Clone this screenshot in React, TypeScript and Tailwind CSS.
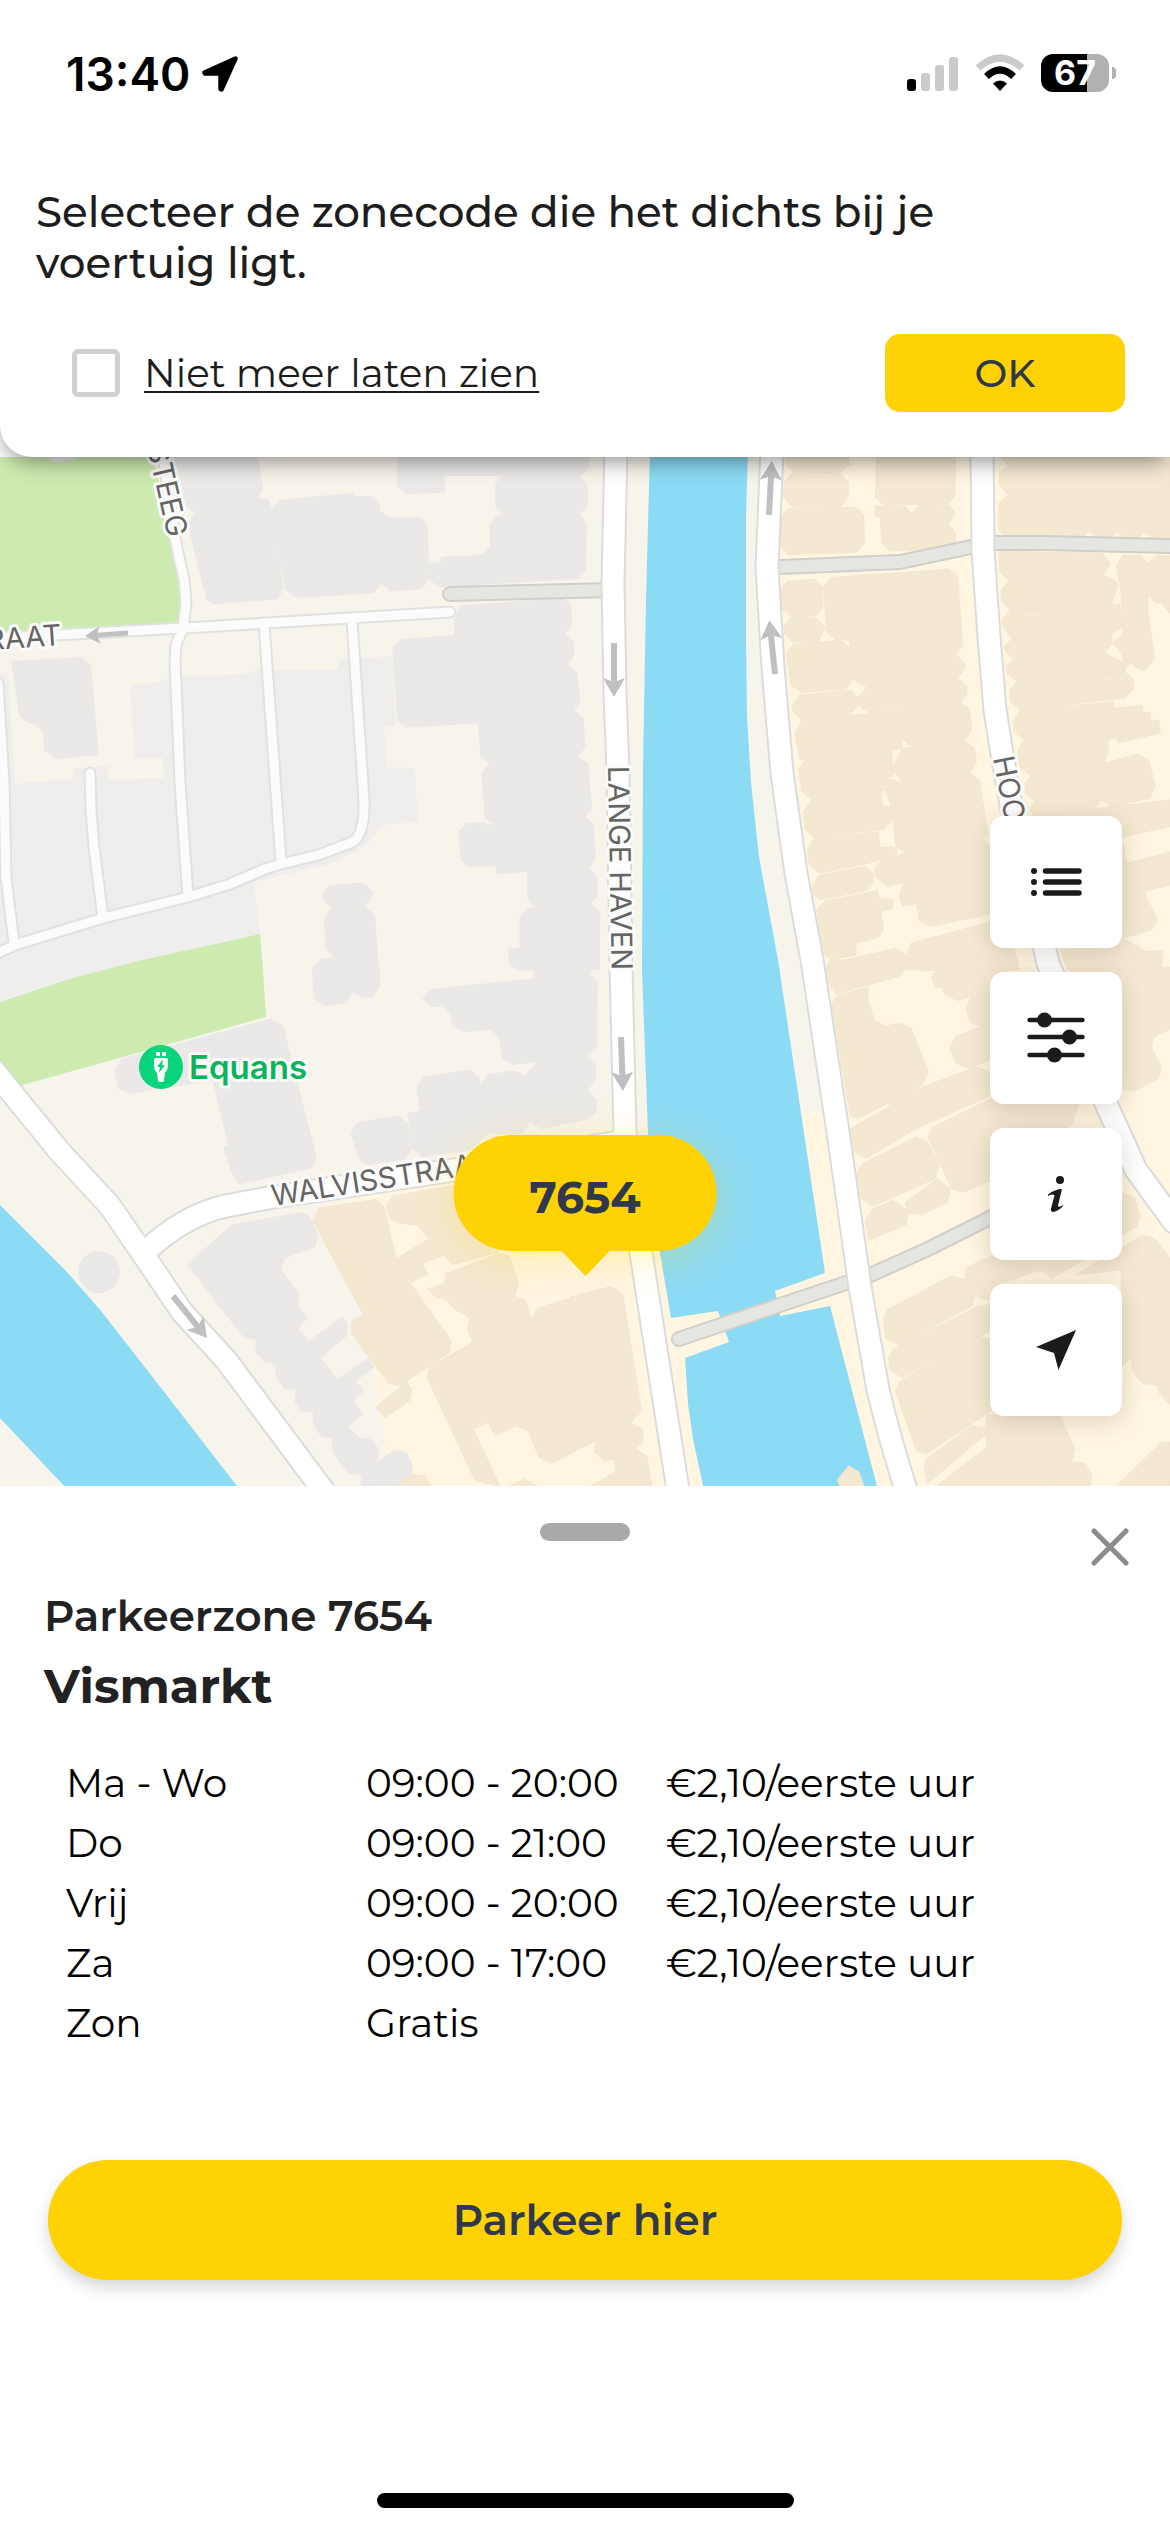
import React, { useState } from 'react';

const TARIFFS = [
  { day: 'Ma - Wo', hours: '09:00 - 20:00', price: '€2,10/eerste uur' },
  { day: 'Do', hours: '09:00 - 21:00', price: '€2,10/eerste uur' },
  { day: 'Vrij', hours: '09:00 - 20:00', price: '€2,10/eerste uur' },
  { day: 'Za', hours: '09:00 - 17:00', price: '€2,10/eerste uur' },
  { day: 'Zon', hours: 'Gratis', price: '' },
];

interface Tile {
  transform: string;
  grey: string[];
  sand: string[];
}

// Building footprints, per map tile
const TILES: Tile[] = [
  {
    transform: 'translate(0 450) scale(.3827 .3333)',
    grey: [
      '455,20 675,20 688,115 673,143 693,145 705,152 710,175 742,418 725,448 557,463 540,450 490,225 508,185 485,170',
      '708,180 728,150 922,128 928,138 970,138 992,162 992,180 1017,200 1095,200 1118,225 1122,385 1102,417 1023,425 995,402 977,430 775,444 745,420',
      '1037,20 1037,108 1060,133 1162,128 1162,78 1312,78 1294,100 1294,170 1315,193 1298,197 1279,225 1279,290 1258,315 1152,320 1152,336 1122,338 1122,390 1148,412 1510,387 1530,362 1533,220 1515,193 1535,170 1535,105 1515,80 1540,52 1540,20',
      '1185,495 1205,467 1470,443 1492,463 1495,525 1477,550 1500,575 1502,615 1485,642 1508,668 1517,755 1500,780 1525,803 1530,890 1512,920 1537,940 1547,1075 1530,1100 1552,1122 1557,1225 1540,1258 1562,1280 1562,1340 1545,1360 1568,1385 1568,1560 1350,1560 1330,1540 1328,1495 1357,1492 1357,1405 1378,1375 1400,1372 1378,1350 1376,1267 1295,1272 1295,1248 1227,1253 1203,1230 1198,1145 1218,1120 1267,1115 1267,1125 1290,1122 1267,1105 1258,970 1278,940 1255,918 1249,820 1060,833 1038,812 1025,595 1045,567 1187,555',
      '842,1335 862,1305 948,1298 975,1325 972,1345 952,1368 980,1395 990,1560 815,1560 835,1527 875,1523 850,1497 847,1403 866,1375 842,1348',
      '30,633 213,621 238,645 258,915 145,928 115,900 112,845 90,822 77,822 50,797 35,680',
      '115,20 145,38 195,27 205,20',
    ],
    sand: [],
  },
  {
    transform: 'translate(570 450) scale(.3827 .3333)',
    grey: [
      '0,20 50,20 50,55 25,80 47,105 45,165 22,193 43,220 42,362 22,387 0,390',
      '0,1560 0,1385 70,1385 75,1560',
    ],
    sand: [
      '565,20 730,20 730,45 705,70 582,65 562,40',
      '560,95 582,66 705,70 728,97 728,140 708,170 580,170 557,140',
      '552,200 570,175 745,172 768,195 770,280 748,307 570,314 549,285',
      '800,20 1008,20 1005,140 985,162 820,165 798,143',
      '797,168 875,168 893,190 912,166 990,165 1008,190 988,222 1008,248 1008,272 990,297 838,303 815,280 810,200 797,200',
      '1125,20 1568,20 1568,265 1525,270 1502,245 1480,270 1452,268 1430,243 1412,270 1380,270 1358,243 1335,268 1142,265 1120,240 1120,160 1145,135 1122,105 1122,65 1145,48',
      '550,415 570,393 640,388 662,412 660,475 642,498 577,500 552,475',
      '560,525 578,502 640,502 667,530 650,574 583,578 560,550',
      '663,410 683,382 990,357 1013,380 1027,585 1008,612 1032,640 1032,658 1013,683 775,712 740,690 730,570 695,570 670,545',
      '1013,683 1038,710 1037,732 1020,757 862,775 780,788 755,765 753,740 775,712',
      '862,777 1020,757 1045,780 1050,840 1030,872 893,892 868,865',
      '868,895 1030,872 1057,895 1062,940 1045,970 1070,990 1092,1150 1078,1167 1110,1200 1110,1390 942,1430 912,1410 905,1362 868,1370 860,1340 872,1297 828,1310 797,1280 797,1250 820,1225 875,1210 850,1185 840,1070 820,1015 855,1015 850,990 870,998 845,965 847,940',
      '565,610 583,583 705,570 730,590 738,690 720,718 605,728 577,705',
      '580,770 600,735 735,720 753,745 750,770 730,795 605,810 582,785',
      '587,850 605,812 860,780 868,893 840,900 845,980 825,988 790,965 787,935 760,908 600,930',
      '597,955 615,930 760,908 787,935 790,965 825,988 850,990 855,1015 813,1022 630,1048 605,1025',
      '610,1085 630,1050 813,1022 818,1070 840,1070 843,1110 820,1138 637,1163 613,1135',
      '620,1200 637,1165 805,1145 810,1192 853,1190 855,1210 800,1235 652,1270 625,1245',
      '632,1310 650,1277 770,1248 793,1270 793,1300 775,1322 655,1350 635,1335',
      '645,1380 665,1353 803,1322 808,1345 845,1350 842,1378 812,1385 820,1440 803,1465 748,1480 748,1515 682,1530 655,1505',
      '675,1560 680,1540 850,1495 880,1515 890,1480 1100,1415 1160,1495 1175,1560',
      '1122,303 1390,310 1412,340 1395,374 1147,393 1122,365',
      '1147,393 1395,374 1430,395 1430,410 1415,465 1150,480 1127,455 1127,420',
      '1150,480 1437,463 1447,530 1415,552 1155,565 1130,530 1130,505',
      '1155,565 1415,552 1418,580 1397,608 1450,640 1450,665 1168,693 1140,668 1140,650 1158,628 1135,600 1135,590',
      '1168,693 1450,665 1475,690 1470,720 1450,745 1178,780 1150,755 1148,720',
      '1178,780 1420,755 1423,775 1495,765 1498,787 1517,790 1517,812 1538,810 1543,850 1433,878 1425,862 1405,872 1408,905 1395,940 1205,977 1175,955 1170,900 1187,870 1160,845 1158,810',
      '1205,977 1395,940 1485,912 1512,930 1530,1010 1515,1045 1415,1070 1390,1050 1365,1080 1290,1095 1215,1100 1200,1080 1215,1052 1190,1030 1188,1000',
      '1427,345 1445,315 1490,315 1510,340 1535,315 1568,318 1568,490 1545,460 1530,460 1510,437 1510,490 1528,625 1505,660 1490,660 1465,640 1450,660 1440,608 1418,580 1447,550 1440,430',
      '1200,1098 1568,1050 1568,1130 1445,1160 1200,1160',
      '1445,1180 1455,1240 1568,1205 1568,1305 1500,1325 1535,1410 1520,1440 1445,1465',
      '1280,1500 1300,1560 1545,1560 1550,1500 1507,1505 1440,1462',
    ],
  },
  {
    transform: 'translate(0 960) scale(.3827 .3444)',
    grey: [
      '1330,0 1355,32 1395,30 1397,53 1125,85 1103,113 1127,137 1155,135 1177,160 1182,190 1210,210 1282,203 1305,227 1312,285 1340,305 1535,278 1558,255 1562,60 1540,40 1562,15 1568,0',
      '1535,278 1558,300 1558,345 1535,378 1560,405 1558,440 1540,462 1415,492 1385,470 1365,505 1300,508 1280,500 1228,553 1105,573 1075,545 1065,445 1098,437 1088,370 1108,338 1225,318 1252,340 1255,360 1275,332 1345,320 1370,335 1405,295',
      '815,25 833,0 990,0 995,75 975,108 950,112 922,93 905,125 850,135 820,110',
      '298,320 318,287 708,170 740,190 828,575 815,605 625,652 605,620 583,540 597,540 555,350 340,390 308,372',
      '916,505 932,472 1040,450 1067,475 1075,552 1060,580 962,597 938,580',
      '488,885 605,768 785,732 810,745 832,800 823,835 745,865 735,900 783,970 780,1005 805,1038 780,1070 805,1107 895,1035 908,1055 908,1090 838,1155 882,1217 962,1155 978,1183 930,1223 952,1250 925,1280 950,1320 910,1355 945,1390 965,1385 992,1422 988,1455 1030,1423 1062,1428 1078,1465 1078,1500 1040,1530 942,1530 945,1495 910,1492 868,1430 868,1390 840,1385 818,1350 818,1315 785,1310 770,1285 772,1250 742,1245 720,1210 720,1175 690,1168 667,1135 668,1103 638,1098',
    ],
    sand: [
      '818,758 832,720 980,695 1003,715 1035,868 1095,825 1122,810 1090,770 1045,765 1018,750 1010,715 1025,685 1185,655 1330,640 1300,850 1180,885 1160,858 1103,880 1118,912 1072,938 1180,1105 1175,1140 1115,1185 1045,1237 1015,1230 918,1085 920,1050 948,1028',
      '1165,910 1305,852 1332,862 1355,940 1345,975 1375,990 1388,1045 1405,1010 1570,955 1570,1388 1440,1462 1408,1445 1380,1367 1350,1353 1292,1380 1275,1343 1237,1362 1308,1530 1240,1510 1115,1210 1125,1180 1235,1110 1222,1072 1228,1040 1190,1015 1163,985 1140,980 1115,955 1162,940',
      '982,1298 1062,1225 1077,1245 1070,1280 1005,1330',
      '1035,1530 1075,1493 1110,1498 1130,1530',
      '1325,1530 1370,1507 1408,1530',
    ],
  },
  {
    transform: 'translate(570 960) scale(.3827 .3444)',
    grey: ['0,0 72,0 70,15 50,40 72,65 70,255 45,280 68,305 68,350 45,378 70,405 68,440 45,462 0,475'],
    sand: [
      '0,978 108,947 138,968 187,1310 158,1345 190,1360 190,1400 172,1420 200,1438 215,1530 50,1530 120,1485 115,1450 90,1455 65,1430 65,1395 90,1375 0,1430',
      '698,1510 728,1468 755,1485 770,1530 705,1530',
      '670,60 695,98 860,48 882,20 878,0 680,0 668,25',
      '683,130 700,100 780,80 778,110 795,175 825,192 862,183 892,198 937,325 920,362 755,460 732,452',
      '885,0 1170,0 1100,90 1100,290 1040,315 1008,300 992,255 1008,222 1073,193 1045,180 1035,140 1047,108 1012,118 980,100 970,78 955,80 945,50 955,30 915,33',
      '835,405 1060,310 1098,325 1098,395 905,490 775,575 735,555 732,490 835,425',
      '935,515 945,487 1100,402 1330,415 1312,480 1100,640 1027,675 998,665',
      '750,620 765,590 905,513 935,530 965,595 955,635 790,715 758,690',
      '875,705 960,635 995,665 985,705 920,740 885,735',
      '772,755 790,722 845,697 885,730 878,768 780,815',
      '1305,30 1568,20 1568,200 1525,225 1520,255 1545,310 1538,345 1475,380 1445,375 1445,90',
      '1445,675 1475,690 1490,745 1480,775 1440,800',
      '1320,915 1440,835 1495,800 1525,805 1568,865 1568,1290 1540,1260 1535,1235 1495,1230 1468,1190 1468,1155 1440,1180 1440,900',
      '818,1045 830,1015 995,917 1045,930 1055,980 1050,1005 860,1120 825,1100',
      '832,1155 845,1130 1065,1005 1100,1000 1100,1075 868,1212 835,1190',
      '850,1250 865,1220 1065,1095 1100,1100 1100,1310 930,1435 905,1425',
      '925,1470 930,1450 1050,1350 1085,1360 1090,1320 1280,1325 1320,1420 1310,1460 1235,1530 955,1530 1090,1415 1085,1380 935,1520',
      '1235,1530 1315,1457 1345,1460 1363,1490 1360,1530',
      '1425,1530 1545,1400 1568,1400 1568,1530',
      '1032,920 1035,892 1100,860 1350,865 1260,925 1230,900 1110,945 1100,990 1055,975',
    ],
  },
];

const LANES = [
  'M0 638L184 628L450 612',
  'M161 440L175 538L184 580L186 603L183 628L176 645L175 660L180 783L188 897',
  'M264 623L281 862',
  'M352 620L364 800Q365 838 350 843L318 855L281 864L265 869L230 884L188 897L103 918L15 945L-4 954',
  'M90 773L91 810L94 847L103 918',
  'M-2 683L4 783L6 877L14 943',
];

const ALLEYS = [
  'M450 594L612 590',
  'M780 567L900 562L971 547L994 543L1044 543L1170 546',
  'M679 1339L777 1306L852 1281',
  'M868 1276L928 1249L1010 1208',
];

const STREETS = [
  'M147 1250Q185 1215 226 1206L268 1198L467 1168L618 1142',
  'M616 450L613 583L615 693L618 770L621 967L625 1132L641 1253L678 1490',
  'M772 450L767 567L773 667L782 773L796 873L812 960L838 1132L860 1287L878 1390Q890 1440 906 1490',
  'M982 450L983 550L989 637L995 710L1003 760L1012 810L1048 963L1108 1108L1136 1170L1174 1222',
  'M-10 1066L60 1152L110 1206L147 1260L182 1312L226 1360L323 1490',
];

const ARROWS = [
  'translate(614 643)',
  'translate(769 515) rotate(183)',
  'translate(775 674) rotate(174)',
  'translate(621 1037) rotate(-2)',
  'translate(173 1296) rotate(-39)',
  'translate(128 633) rotate(86) scale(.8)',
];

function Roads({ paths, casing, fill, width }: { paths: string[]; casing: string; fill: string; width: number }) {
  const d = paths.join('');
  return (
    <g fill="none" strokeLinecap="round" strokeLinejoin="round">
      <path d={d} stroke={casing} strokeWidth={width + 4} />
      <path d={d} stroke={fill} strokeWidth={width} />
    </g>
  );
}

function CityMap() {
  return (
    <svg
      className="absolute inset-0 h-full w-full"
      viewBox="0 457 1170 1029"
      preserveAspectRatio="xMidYMid slice"
      aria-hidden="true"
    >
      <rect x="0" y="440" width="1170" height="1060" fill="#f7f4eb" />
      <path
        fill="#fff5e1"
        d="M772 450L767 567L773 667L782 773L796 873L812 960L832 1111L700 1113L660 1160L624 1150L467 1170L316 1208L313 1222L363 1315L373 1366L385 1442L388 1490H1170V450Z"
      />
      <path fill="#cdebb0" d="M0 450H151L174 538L183 580L186 603L182 628L0 638Z" />
      <path
        fill="#efeeec"
        d="M0 673H8L15 784L73 779V769L108 766L109 780L164 778L163 758H135L130 685L159 682L178 673L191 677L245 674L264 667L282 671L338 669V660L392 656L396 726L384 727L387 767L415 768L418 822L384 825L364 847L333 863L254 882L260 934L142 960L69 979L0 1002Z"
      />
      <path fill="#cdebb0" d="M0 1002L69 979L142 960L260 934L263 970L266 1017L19 1086L0 1063Z" />
      <g fill="#8cdbf5">
        <path d="M650 450L646 600L643 767L642 970L648 1132L660 1253L671 1318L718 1311L729 1342L685 1358L688 1404L693 1439L704 1490H878L830 1306L780 1316L775 1291L825 1273L778 960L759 857L751 783L747 717L746 637V517L748 450Z" />
        <path d="M0 1205L32 1237L67 1272L101 1311L172 1402L240 1490H68L0 1418Z" />
      </g>

      <Roads paths={LANES} casing="#e0e2e0" fill="#fbfbfb" width={9} />
      {TILES.map((tile) => (
        <g key={tile.transform} transform={tile.transform}>
          <g fill="#eae9e7">
            {tile.grey.map((points) => (
              <polygon key={points} points={points} />
            ))}
          </g>
          <g fill="#f5e8d1" stroke="#eaddc5">
            {tile.sand.map((points) => (
              <polygon key={points} points={points} />
            ))}
          </g>
        </g>
      ))}
      <circle cx="99" cy="1272" r="21" fill="#eae9e7" />
      <Roads paths={ALLEYS} casing="#cfd0c9" fill="#e4e6e1" width={12} />
      <Roads paths={STREETS} casing="#dbdddd" fill="#ffffff" width={21} />

      <g fill="#c0c0c0">
        {ARROWS.map((transform) => (
          <path key={transform} transform={transform} d="M-3 0H3V38L11 35L0 54L-11 35L-3 38Z" />
        ))}
      </g>

      <g
        className="font-[Inter,sans-serif]"
        fontSize="29"
        fill="#666563"
        stroke="#fbfbfb"
        strokeWidth="6"
        strokeLinejoin="round"
        paintOrder="stroke"
      >
        <text transform="translate(147 447) rotate(77)">STEEG</text>
        <text transform="translate(62 645) rotate(-4)" textAnchor="end">
          RAAT
        </text>
        <text transform="translate(608 766) rotate(89)">LANGE HAVEN</text>
        <text transform="translate(993 758) rotate(79)">HOO</text>
        <text transform="translate(273 1206) rotate(-9)">WALVISSTRAAT</text>
        <text x="189" y="1079" fontSize="33" fontWeight="600" fill="#0bb45b">
          Equans
        </text>
      </g>
      <circle cx="161" cy="1067" r="22" fill="#07d47b" />
      <path
        fill="#ffffff"
        d="M156 1052H160V1056H156ZM162 1052H166V1056H162ZM154 1060Q154 1058 156 1058H166Q168 1058 168 1060V1066Q168 1070 165 1073L164 1081Q164 1082 161 1082Q158 1082 158 1081L157 1073Q154 1070 154 1066Z"
      />
      <path fill="#07d47b" d="M163 1059L157 1067H160L159 1073L165 1065H162Z" />
    </svg>
  );
}

function StatusBar() {
  return (
    <div className="flex h-[141px] items-start justify-between pt-[46px] pr-[54px] pl-[66px] font-[Inter,sans-serif]">
      <div className="flex items-center gap-3">
        <span className="text-[46px] leading-[56px] font-semibold text-black">13:40</span>
        <svg className="h-[36px] w-[36px]" viewBox="0 0 36 36" aria-hidden="true">
          <path
            d="M33.500 2.500L2.500 16.500L3 17.500H18.500V33L19.500 33.500Z"
            fill="#000"
            stroke="#000"
            strokeWidth="4.500"
            strokeLinejoin="round"
          />
        </svg>
      </div>
      <div className="flex items-center gap-4 pt-2">
        <svg className="h-[38px] w-[52px]" viewBox="0 0 52 38" aria-hidden="true">
          <rect x="0" y="25" width="9" height="12" rx="3" fill="#000" />
          <rect x="14" y="19" width="9" height="18" rx="3" fill="#cbcbcb" />
          <rect x="28" y="11" width="9" height="26" rx="3" fill="#cbcbcb" />
          <rect x="42" y="3" width="9" height="34" rx="3" fill="#cbcbcb" />
        </svg>
        <svg className="h-[38px] w-[50px]" viewBox="0 0 50 38" aria-hidden="true">
          <path d="M3 14Q25 -6 47 14" fill="none" stroke="#cbcbcb" strokeWidth="7" />
          <path d="M11.500 22.500Q25 9.500 38.500 22.500" fill="none" stroke="#000" strokeWidth="7" />
          <path d="M18 29.500Q25 23.500 32 29.500L25.500 36.500Q25 37 24.500 36.500Z" fill="#000" />
        </svg>
        <div className="flex items-center gap-[3px]">
          <div className="flex h-[38px] w-[68px] items-center justify-center rounded-[12px] bg-linear-to-r from-black from-67% to-[#b1b1b1] to-67% text-[34px] leading-[38px] font-bold text-white">
            67
          </div>
          <div className="h-[12px] w-[4px] rounded-r-full bg-[#b1b1b1]" />
        </div>
      </div>
    </div>
  );
}

function MapButton({ label, children }: { label: string; children: React.ReactNode }) {
  return (
    <button
      type="button"
      aria-label={label}
      className="flex h-[132px] w-[132px] items-center justify-center rounded-[14px] bg-white text-[#1b1b1b] shadow-[0_4px_24px_rgba(60,40,0,0.18)]"
    >
      {children}
    </button>
  );
}

export default function App() {
  const [hidden, setHidden] = useState(false);

  return (
    <div className="flex min-h-screen flex-col bg-white font-[Montserrat,Inter,sans-serif] text-[#1d1d1d]">
      <header className="relative z-10 rounded-bl-[32px] bg-white pb-[45px] shadow-[0_8px_22px_-4px_rgba(0,0,0,0.45)]">
        <StatusBar />
        <p className="max-w-[1000px] pt-[46px] pl-9 text-[42px] leading-[51px] font-medium">
          Selecteer de zonecode die het dichts bij je voertuig ligt.
        </p>
        <div className="mt-[45px] flex items-center justify-between pr-[45px] pl-[72px]">
          <div className="flex items-center gap-6">
            <input
              id="hide-hint"
              type="checkbox"
              checked={hidden}
              onChange={(e) => setHidden(e.target.checked)}
              className="h-12 w-12 appearance-none rounded-[6px] border-[5px] border-[#d0d0d0] bg-white checked:bg-[#ffd204]"
            />
            <label htmlFor="hide-hint" className="text-[39px] leading-[48px] underline decoration-2 underline-offset-4">
              Niet meer laten zien
            </label>
          </div>
          <button
            type="button"
            className="h-[78px] w-[240px] rounded-[15px] bg-[#ffd204] text-[39px] font-medium text-[#30394c]"
          >
            OK
          </button>
        </div>
      </header>

      <main className="relative min-h-[700px] flex-1 overflow-hidden">
        <CityMap />

        <button
          type="button"
          className="absolute top-[678px] left-1/2 flex h-[116px] w-[263px] -translate-x-1/2 items-center justify-center rounded-full bg-[#ffd204] pt-2 text-[44px] font-bold text-[#30394c] shadow-[0_8px_40px_rgba(255,210,4,0.25)]"
        >
          7654
          <svg className="absolute top-[115px] h-[26px] w-[50px]" viewBox="0 0 50 26" aria-hidden="true">
            <path d="M0 0H50L25 26Z" fill="#ffd204" />
          </svg>
        </button>

        <div className="absolute right-12 bottom-[70px] flex flex-col gap-6">
          <MapButton label="Lijst">
            <svg className="h-[30px] w-[52px]" viewBox="0 0 52 30" aria-hidden="true">
              <g fill="currentColor">
                <circle cx="4" cy="4" r="3" />
                <circle cx="4" cy="15" r="3" />
                <circle cx="4" cy="26" r="3" />
              </g>
              <path d="M15.500 4H49M15.500 15H49M15.500 26H49" stroke="currentColor" strokeWidth="5.500" strokeLinecap="round" />
            </svg>
          </MapButton>
          <MapButton label="Filters">
            <svg className="h-[52px] w-[58px]" viewBox="0 0 58 52" aria-hidden="true">
              <path d="M2.500 8H55.500M2.500 25H55.500M2.500 43H55.500" stroke="currentColor" strokeWidth="4.500" strokeLinecap="round" />
              <g fill="currentColor">
                <circle cx="17.500" cy="8" r="7.500" />
                <circle cx="42.500" cy="25" r="7.500" />
                <circle cx="27.500" cy="43" r="7.500" />
              </g>
            </svg>
          </MapButton>
          <MapButton label="Informatie">
            <svg className="h-[36px] w-[16px]" viewBox="0 0 16 36" aria-hidden="true">
              <circle cx="12" cy="4" r="4" fill="currentColor" />
              <path
                d="M0 18.500Q7 13 14 13L10 29.500Q9.500 32 16 29Q10 36 4.500 36Q2.500 35.500 3 32.500L6.500 19.500Q5 17.500 0 20Z"
                fill="currentColor"
              />
            </svg>
          </MapButton>
          <MapButton label="Mijn locatie">
            <svg className="h-[40px] w-[40px]" viewBox="0 0 40 40" aria-hidden="true">
              <path d="M40 0L0 17L18 23L22.500 40Z" fill="currentColor" />
            </svg>
          </MapButton>
        </div>
      </main>

      <section className="flex flex-col pb-6">
        <div className="relative flex h-[104px] justify-center pt-[37px]">
          <div className="h-[18px] w-[90px] rounded-full bg-[#a9a9a9]" />
          <button type="button" aria-label="Sluiten" className="absolute top-[42px] right-[41px] text-[#8c8c8c]">
            <svg className="h-[38px] w-[38px]" viewBox="0 0 38 38" aria-hidden="true">
              <path d="M3 3L35 35M35 3L3 35" stroke="currentColor" strokeWidth="5" strokeLinecap="round" />
            </svg>
          </button>
        </div>
        <div className="px-11 text-[#222]">
          <p className="text-[42px] leading-[52px] font-semibold">Parkeerzone 7654</p>
          <h1 className="pt-3 text-[48px] leading-[64px] font-bold">Vismarkt</h1>
        </div>
        <table className="mt-[35px] ml-[66px] w-[936px] table-fixed border-collapse text-left text-[39px] leading-[60px] text-black">
          <tbody>
            {TARIFFS.map((tariff) => (
              <tr key={tariff.day}>
                <th scope="row" className="w-[300px] p-0 font-normal">
                  {tariff.day}
                </th>
                <td className="w-[300px] p-0">{tariff.hours}</td>
                <td className="p-0">{tariff.price}</td>
              </tr>
            ))}
          </tbody>
        </table>
        <button
          type="button"
          className="mx-12 mt-[107px] h-[120px] rounded-full bg-[#ffd204] text-[42px] font-semibold text-[#30394c] shadow-[0_8px_16px_rgba(0,0,0,0.16)]"
        >
          Parkeer hier
        </button>
        <div className="mt-[213px] h-[15px] w-[417px] self-center rounded-full bg-black" />
      </section>
    </div>
  );
}
